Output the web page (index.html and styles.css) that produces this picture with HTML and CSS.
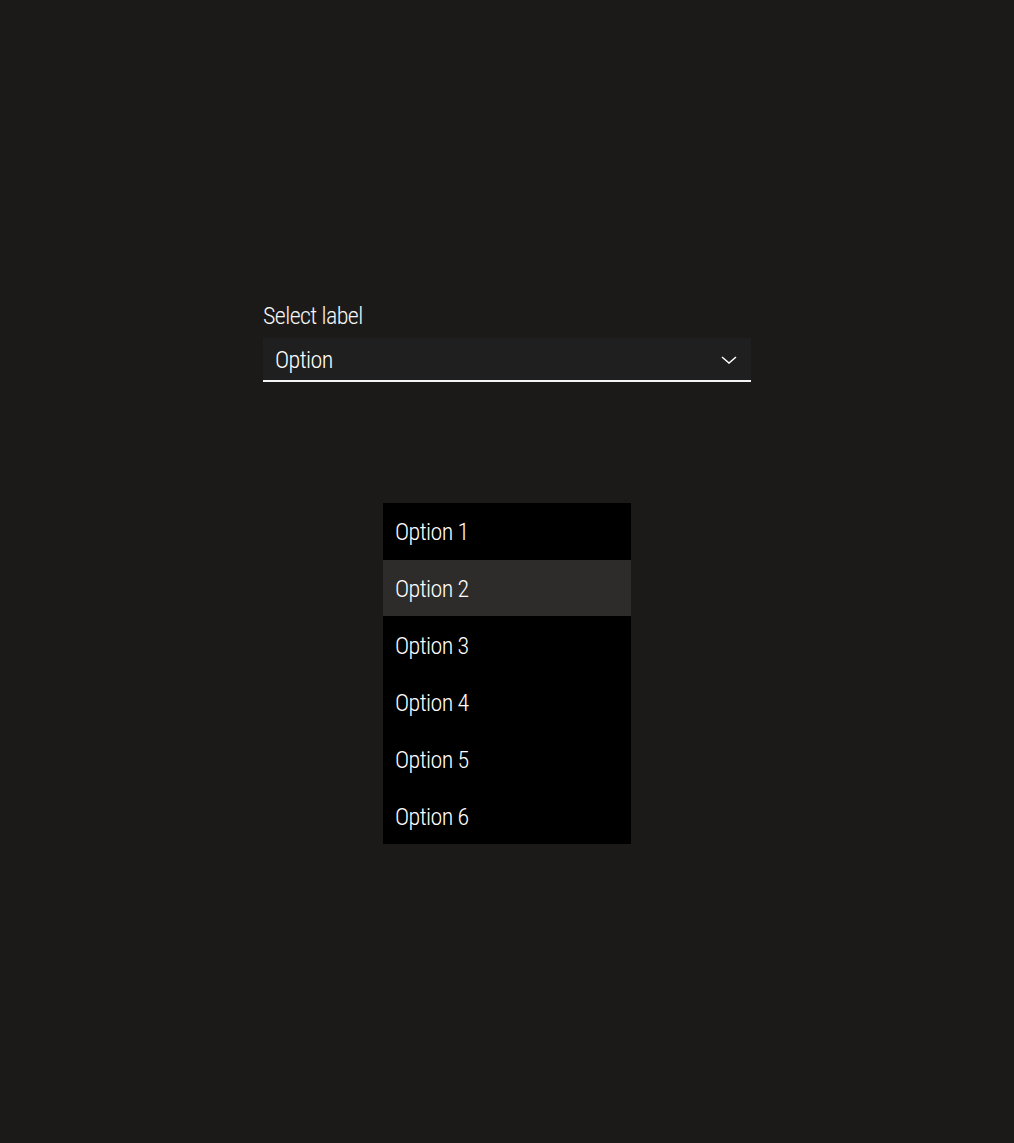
FILE: index.html
```html
<!DOCTYPE html>
<html lang="en">
<head>
<meta charset="utf-8">
<title>Select</title>
<link rel="stylesheet" href="styles.css">
</head>
<body>
<main class="page">
  <div class="field">
    <label class="label">Select label</label>
    <div class="select">
      <span class="value">Option</span>
      <svg class="chevron" width="16" height="10" viewBox="0 0 16 10" aria-hidden="true">
        <path d="M1 2 L8 8 L15 2" fill="none" stroke="#ffffff" stroke-width="1.5"/>
      </svg>
    </div>
  </div>
  <ul class="listbox">
    <li class="option">Option 1</li>
    <li class="option active">Option 2</li>
    <li class="option">Option 3</li>
    <li class="option">Option 4</li>
    <li class="option">Option 5</li>
    <li class="option">Option 6</li>
  </ul>
</main>
</body>
</html>
```

FILE: styles.css
```css
html, body {
  margin: 0;
  padding: 0;
  background: #1b1a18;
  height: 100%;
}
body {
  font-family: Roboto, "DejaVu Sans Condensed", sans-serif;
  font-stretch: 75%;
  font-weight: 340;
  letter-spacing: -0.6px;
  color: #ffffff;
}
.page {
  display: flex;
  flex-direction: column;
  align-items: center;
  padding-top: 300px;
}
.field {
  width: 488px;
  display: flex;
  flex-direction: column;
}
.label {
  font-size: 24px;
  line-height: 32px;
  height: 38px;
  color: #f6f6f6;
}
.select {
  box-sizing: border-box;
  height: 44px;
  background: #201f1f;
  border-bottom: 2px solid #f4f4f4;
  display: flex;
  align-items: center;
  justify-content: space-between;
  padding: 1px 14px 0 12px;
}
.value {
  font-size: 24px;
  color: #ffffff;
}
.chevron {
  display: block;
}
.listbox {
  list-style: none;
  margin: 121px 0 0 0;
  padding: 0;
  width: 248px;
  background: #000000;
}
.option {
  box-sizing: border-box;
  height: 56px;
  margin-bottom: 1px;
  display: flex;
  align-items: center;
  padding: 2px 0 0 12px;
  font-size: 24px;
  color: #ffffff;
}
.option:last-child {
  margin-bottom: 0;
}
.option.active {
  background: #2d2c2a;
}
```
